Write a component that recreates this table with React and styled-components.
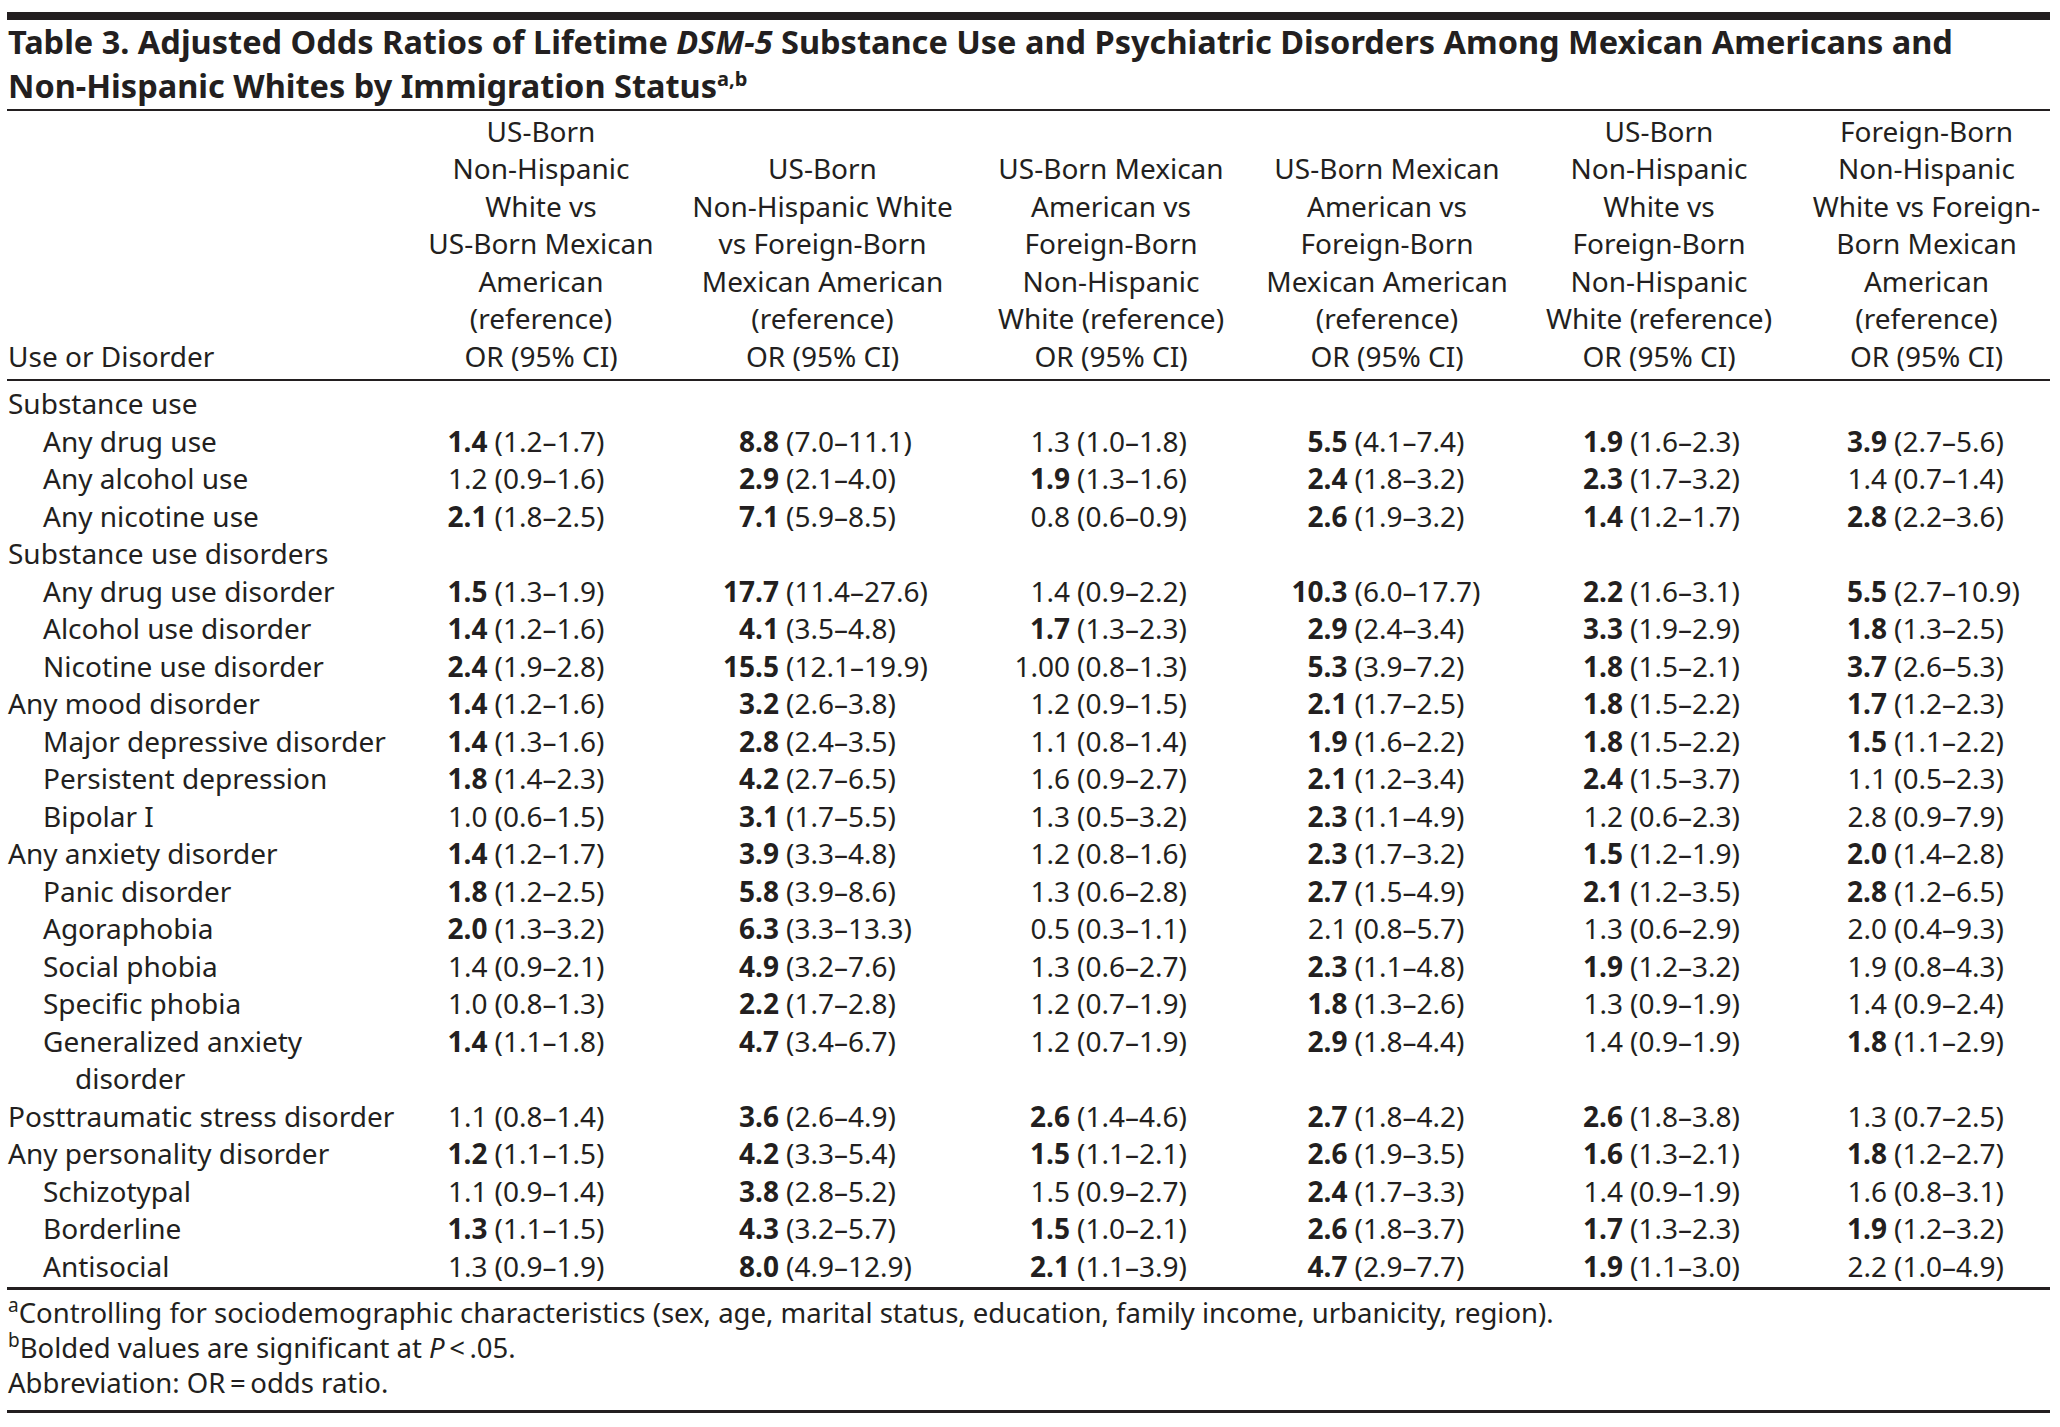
import React from 'react';
import styled, { createGlobalStyle } from 'styled-components';

const GlobalStyle = createGlobalStyle`
  html, body { margin: 0; padding: 0; background: #ffffff; }
  body { color: #231f20; font-family: "Noto Sans", "Open Sans", "DejaVu Sans", sans-serif; }
`;

const INK = '#231f20';
const COLS = '392px 282px 281px 296px 256px 288px 247px';
// left offset of the OR box inside each data column (values are aligned on the CI parenthesis)
const PAD = [29.5, 39, 49, 30.5, 50, 26];

const Page = styled.div`
  width: 2043px;
  padding: 12px 10px 0 7px;
`;

const Rule = styled.div`
  height: ${p => p.$w}px;
  background: ${INK};
`;

const Title = styled.h1`
  margin: 0;
  padding: 0 0 0.2px 1px;
  font-size: 32.5px;
  font-weight: 700;
  white-space: nowrap;
`;

const TitleLine = styled.span`
  display: block;
  line-height: 44.4px;
`;

const Em = styled.i`
  font-style: italic;
`;

const Sup = styled.sup`
  font-size: ${p => p.$size || 19}px;
  line-height: 0;
  vertical-align: ${p => p.$raise || 11}px;
  font-weight: inherit;
`;

const Row = styled.div`
  display: grid;
  grid-template-columns: ${COLS};
  padding-left: 1px;
  font-size: 28px;
  line-height: 37.5px;
`;

const HeadRow = styled(Row)`
  align-items: end;
  padding-top: 1.5px;
  padding-bottom: 4px;
`;

const HeadCell = styled.div`
  text-align: ${p => (p.$left ? 'left' : 'center')};
  white-space: nowrap;
`;

const Body = styled.div`
  padding: 4px 0 2px;
`;

const Label = styled.div`
  white-space: nowrap;
  padding-left: ${p => p.$level * 35 + (p.$hang ? 32 : 0)}px;
  text-indent: ${p => (p.$hang ? -32 : 0)}px;
`;

const Value = styled.div`
  display: flex;
  align-items: baseline;
  white-space: nowrap;
  padding-left: ${p => p.$pad}px;
`;

const OR = styled.span`
  width: 58px;
  flex: none;
  margin-right: 7px;
  text-align: right;
  font-weight: ${p => (p.$sig ? 700 : 400)};
`;

const CI = styled.span`
  font-weight: 400;
`;

const Notes = styled.div`
  padding: 4.5px 0 10px 1px;
  font-size: 27.5px;
  line-height: 35px;
`;

const Note = styled.p`
  margin: 0;
  white-space: nowrap;
`;

const headers = [
  ['US-Born', 'Non-Hispanic', 'White vs', 'US-Born Mexican', 'American', '(reference)', 'OR (95% CI)'],
  ['US-Born', 'Non-Hispanic White', 'vs Foreign-Born', 'Mexican American', '(reference)', 'OR (95% CI)'],
  ['US-Born Mexican', 'American vs', 'Foreign-Born', 'Non-Hispanic', 'White (reference)', 'OR (95% CI)'],
  ['US-Born Mexican', 'American vs', 'Foreign-Born', 'Mexican American', '(reference)', 'OR (95% CI)'],
  ['US-Born', 'Non-Hispanic', 'White vs', 'Foreign-Born', 'Non-Hispanic', 'White (reference)', 'OR (95% CI)'],
  ['Foreign-Born', 'Non-Hispanic', 'White vs Foreign-', 'Born Mexican', 'American', '(reference)', 'OR (95% CI)'],
];

// "OR low high sig" groups separated by ';'
const v = s => s.split(';').map(t => {
  const [or, lo, hi, sig] = t.trim().split(' ');
  return { or, ci: `(${lo}–${hi})`, sig: sig === '*' };
});

const rows = [
  { label: 'Substance use', level: 0 },
  { label: 'Any drug use', level: 1, vals: v('1.4 1.2 1.7 *; 8.8 7.0 11.1 *; 1.3 1.0 1.8 -; 5.5 4.1 7.4 *; 1.9 1.6 2.3 *; 3.9 2.7 5.6 *') },
  { label: 'Any alcohol use', level: 1, vals: v('1.2 0.9 1.6 -; 2.9 2.1 4.0 *; 1.9 1.3 1.6 *; 2.4 1.8 3.2 *; 2.3 1.7 3.2 *; 1.4 0.7 1.4 -') },
  { label: 'Any nicotine use', level: 1, vals: v('2.1 1.8 2.5 *; 7.1 5.9 8.5 *; 0.8 0.6 0.9 -; 2.6 1.9 3.2 *; 1.4 1.2 1.7 *; 2.8 2.2 3.6 *') },
  { label: 'Substance use disorders', level: 0 },
  { label: 'Any drug use disorder', level: 1, vals: v('1.5 1.3 1.9 *; 17.7 11.4 27.6 *; 1.4 0.9 2.2 -; 10.3 6.0 17.7 *; 2.2 1.6 3.1 *; 5.5 2.7 10.9 *') },
  { label: 'Alcohol use disorder', level: 1, vals: v('1.4 1.2 1.6 *; 4.1 3.5 4.8 *; 1.7 1.3 2.3 *; 2.9 2.4 3.4 *; 3.3 1.9 2.9 *; 1.8 1.3 2.5 *') },
  { label: 'Nicotine use disorder', level: 1, vals: v('2.4 1.9 2.8 *; 15.5 12.1 19.9 *; 1.00 0.8 1.3 -; 5.3 3.9 7.2 *; 1.8 1.5 2.1 *; 3.7 2.6 5.3 *') },
  { label: 'Any mood disorder', level: 0, vals: v('1.4 1.2 1.6 *; 3.2 2.6 3.8 *; 1.2 0.9 1.5 -; 2.1 1.7 2.5 *; 1.8 1.5 2.2 *; 1.7 1.2 2.3 *') },
  { label: 'Major depressive disorder', level: 1, vals: v('1.4 1.3 1.6 *; 2.8 2.4 3.5 *; 1.1 0.8 1.4 -; 1.9 1.6 2.2 *; 1.8 1.5 2.2 *; 1.5 1.1 2.2 *') },
  { label: 'Persistent depression', level: 1, vals: v('1.8 1.4 2.3 *; 4.2 2.7 6.5 *; 1.6 0.9 2.7 -; 2.1 1.2 3.4 *; 2.4 1.5 3.7 *; 1.1 0.5 2.3 -') },
  { label: 'Bipolar I', level: 1, vals: v('1.0 0.6 1.5 -; 3.1 1.7 5.5 *; 1.3 0.5 3.2 -; 2.3 1.1 4.9 *; 1.2 0.6 2.3 -; 2.8 0.9 7.9 -') },
  { label: 'Any anxiety disorder', level: 0, vals: v('1.4 1.2 1.7 *; 3.9 3.3 4.8 *; 1.2 0.8 1.6 -; 2.3 1.7 3.2 *; 1.5 1.2 1.9 *; 2.0 1.4 2.8 *') },
  { label: 'Panic disorder', level: 1, vals: v('1.8 1.2 2.5 *; 5.8 3.9 8.6 *; 1.3 0.6 2.8 -; 2.7 1.5 4.9 *; 2.1 1.2 3.5 *; 2.8 1.2 6.5 *') },
  { label: 'Agoraphobia', level: 1, vals: v('2.0 1.3 3.2 *; 6.3 3.3 13.3 *; 0.5 0.3 1.1 -; 2.1 0.8 5.7 -; 1.3 0.6 2.9 -; 2.0 0.4 9.3 -') },
  { label: 'Social phobia', level: 1, vals: v('1.4 0.9 2.1 -; 4.9 3.2 7.6 *; 1.3 0.6 2.7 -; 2.3 1.1 4.8 *; 1.9 1.2 3.2 *; 1.9 0.8 4.3 -') },
  { label: 'Specific phobia', level: 1, vals: v('1.0 0.8 1.3 -; 2.2 1.7 2.8 *; 1.2 0.7 1.9 -; 1.8 1.3 2.6 *; 1.3 0.9 1.9 -; 1.4 0.9 2.4 -') },
  { label: ['Generalized anxiety', 'disorder'], level: 1, vals: v('1.4 1.1 1.8 *; 4.7 3.4 6.7 *; 1.2 0.7 1.9 -; 2.9 1.8 4.4 *; 1.4 0.9 1.9 -; 1.8 1.1 2.9 *') },
  { label: 'Posttraumatic stress disorder', level: 0, vals: v('1.1 0.8 1.4 -; 3.6 2.6 4.9 *; 2.6 1.4 4.6 *; 2.7 1.8 4.2 *; 2.6 1.8 3.8 *; 1.3 0.7 2.5 -') },
  { label: 'Any personality disorder', level: 0, vals: v('1.2 1.1 1.5 *; 4.2 3.3 5.4 *; 1.5 1.1 2.1 *; 2.6 1.9 3.5 *; 1.6 1.3 2.1 *; 1.8 1.2 2.7 *') },
  { label: 'Schizotypal', level: 1, vals: v('1.1 0.9 1.4 -; 3.8 2.8 5.2 *; 1.5 0.9 2.7 -; 2.4 1.7 3.3 *; 1.4 0.9 1.9 -; 1.6 0.8 3.1 -') },
  { label: 'Borderline', level: 1, vals: v('1.3 1.1 1.5 *; 4.3 3.2 5.7 *; 1.5 1.0 2.1 *; 2.6 1.8 3.7 *; 1.7 1.3 2.3 *; 1.9 1.2 3.2 *') },
  { label: 'Antisocial', level: 1, vals: v('1.3 0.9 1.9 -; 8.0 4.9 12.9 *; 2.1 1.1 3.9 *; 4.7 2.9 7.7 *; 1.9 1.1 3.0 *; 2.2 1.0 4.9 -') },
];

function LabelCell({ label, level }) {
  if (Array.isArray(label)) {
    return (
      <Label $level={level} $hang>
        {label[0]}
        <br />
        {label[1]}
      </Label>
    );
  }
  return <Label $level={level}>{label}</Label>;
}

export default function App() {
  return (
    <Page>
      <GlobalStyle />
      <Rule $w={8} />
      <Title>
        <TitleLine>
          Table 3. Adjusted Odds Ratios of Lifetime <Em>DSM-5</Em> Substance Use and Psychiatric Disorders Among Mexican Americans and
        </TitleLine>
        <TitleLine>
          Non-Hispanic Whites by Immigration Status<Sup $size={20} $raise={12}>a,b</Sup>
        </TitleLine>
      </Title>
      <Rule $w={2} />
      <HeadRow>
        <HeadCell $left>Use or Disorder</HeadCell>
        {headers.map((lines, i) => (
          <HeadCell key={i}>
            {lines.map((l, j) => (
              <React.Fragment key={j}>
                {j > 0 && <br />}
                {l}
              </React.Fragment>
            ))}
          </HeadCell>
        ))}
      </HeadRow>
      <Rule $w={2} />
      <Body>
        {rows.map((r, i) => (
          <Row key={i}>
            <LabelCell label={r.label} level={r.level} />
            {(r.vals || []).map((c, j) => (
              <Value key={j} $pad={PAD[j]}>
                <OR $sig={c.sig}>{c.or}</OR>
                <CI>{c.ci}</CI>
              </Value>
            ))}
          </Row>
        ))}
      </Body>
      <Rule $w={3} />
      <Notes>
        <Note>
          <Sup>a</Sup>Controlling for sociodemographic characteristics (sex, age, marital status, education, family income, urbanicity, region).
        </Note>
        <Note>
          <Sup>b</Sup>Bolded values are significant at <i>P</i>{'\u2009<\u2009'}.05.
        </Note>
        <Note>Abbreviation: OR{'\u2009=\u2009'}odds ratio.</Note>
      </Notes>
      <Rule $w={3} />
    </Page>
  );
}
